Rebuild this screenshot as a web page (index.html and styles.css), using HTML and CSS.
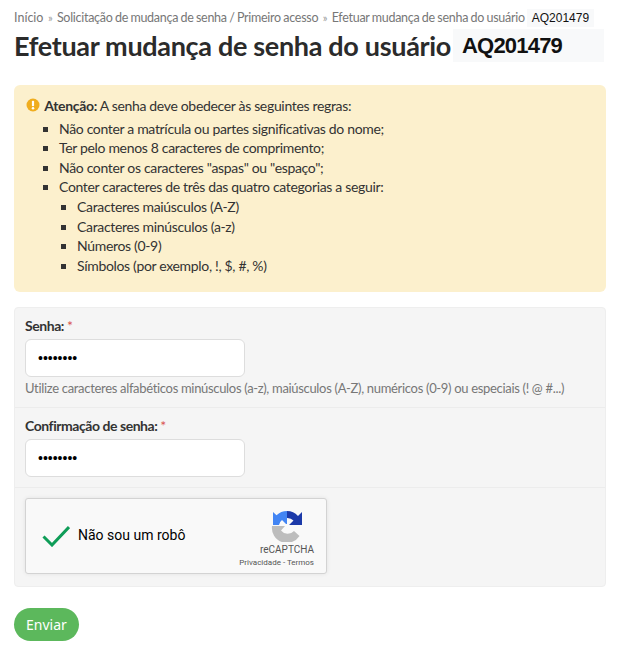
FILE: index.html
```html
<!DOCTYPE html>
<html lang="pt-BR">
<head>
    <meta charset="UTF-8">
    <meta name="viewport" content="width=device-width, initial-scale=1.0">
    <title>Efetuar mudança de senha do usuário</title>
    <link rel="stylesheet" href="styles.css">
</head>
<body>
    <nav class="breadcrumb">
        <a href="#">Início</a>
        <span class="sep">»</span>
        <a href="#">Solicitação de mudança de senha / Primeiro acesso</a>
        <span class="sep">»</span>
        <span>Efetuar mudança de senha do usuário</span>
        <span class="code-small">AQ201479</span>
    </nav>
    <div class="page-title">
        <h1>Efetuar mudança de senha do usuário</h1>
        <span class="code-big">AQ201479</span>
    </div>

    <div class="alert">
        <p class="alert-head">
            <svg class="alert-icon" viewBox="0 0 14 14" width="14" height="14">
                <circle cx="7" cy="7" r="6.5" fill="#f0ad1e"/>
                <rect x="5.9" y="2.8" width="2.2" height="5.4" rx="0.8" fill="#fff"/>
                <circle cx="7" cy="10.3" r="1.25" fill="#fff"/>
            </svg>
            <strong>Atenção:</strong> A senha deve obedecer às seguintes regras:
        </p>
        <ul>
            <li>Não conter a matrícula ou partes significativas do nome;</li>
            <li>Ter pelo menos 8 caracteres de comprimento;</li>
            <li>Não conter os caracteres "aspas" ou "espaço";</li>
            <li>Conter caracteres de três das quatro categorias a seguir:
                <ul>
                    <li>Caracteres maiúsculos (A-Z)</li>
                    <li>Caracteres minúsculos (a-z)</li>
                    <li>Números (0-9)</li>
                    <li>Símbolos (por exemplo, !, $, #, %)</li>
                </ul>
            </li>
        </ul>
    </div>

    <form class="panel">
        <div class="field">
            <label for="senha">Senha: <span class="req">*</span></label>
            <input type="password" id="senha" value="12345678">
            <p class="help">Utilize caracteres alfabéticos minúsculos (a-z), maiúsculos (A-Z), numéricos (0-9) ou especiais (! @ #...)</p>
        </div>
        <div class="field">
            <label for="confirma">Confirmação de senha: <span class="req">*</span></label>
            <input type="password" id="confirma" value="12345678">
        </div>
        <div class="field field-captcha">
            <div class="captcha">
                <svg class="captcha-check" viewBox="0 0 28 22" width="28" height="22">
                    <path d="M1.500 11.500 L10 20 L27 2" fill="none" stroke="#0f9d58" stroke-width="3"/>
                </svg>
                <span class="captcha-label">Não sou um robô</span>
                <div class="captcha-brand">
                    <svg class="captcha-logo" viewBox="0 0 32 32" width="32" height="32">
                        <path d="M16 1 A15 15 0 0 1 27 6 L31 2 V15 H18 L22.500 10.500 A8.500 8.500 0 0 0 16 8 Z" fill="#1c3aa9"/>
                        <path d="M16 1 A15 15 0 0 0 5.500 5.300 L2 2 V15 H8 A8 8 0 0 1 11 10 L15 14 H16 Z" fill="#4285f4"/>
                        <path d="M1 16 H14 L10 20.500 A8.500 8.500 0 0 0 23 21 L28.500 26 A15 15 0 0 1 1 16 Z" fill="#bdbdbd"/>
                    </svg>
                    <span class="captcha-name">reCAPTCHA</span>
                    <span class="captcha-links">Privacidade - Termos</span>
                </div>
            </div>
        </div>
    </form>

    <button class="btn-send" type="button">Enviar</button>
</body>
</html>
```

FILE: styles.css
```css
body {
    margin: 0;
    padding: 9px 12px 10px 14px;
    font-family: Lato, sans-serif;
    font-size: 14px;
    line-height: 1.4;
    letter-spacing: -0.33px;
    color: #333;
    background: #fff;
}
.breadcrumb {
    display: flex;
    align-items: center;
    gap: 4.5px;
    height: 18px;
    font-size: 12.5px;
    letter-spacing: -0.28px;
    word-spacing: -0.5px;
    color: #777;
    white-space: nowrap;
}
.breadcrumb a {
    color: #777;
    text-decoration: none;
}
.breadcrumb a:first-child {
    letter-spacing: 0;
}
.sep {
    color: #999;
    font-size: 11px;
}
.code-small {
    margin-left: -2.5px;
    padding: 0 5px;
    line-height: 18px;
    font-family: "Liberation Sans", sans-serif;
    font-size: 12px;
    letter-spacing: 0;
    color: #111;
    background: #f8f9fa;
}
.page-title {
    display: flex;
    align-items: center;
    gap: 2px;
    margin-top: 2px;
    margin-bottom: 23px;
}
h1 {
    margin: 0;
    font-size: 27px;
    font-weight: 700;
    line-height: 33px;
    letter-spacing: -0.32px;
    color: #2b2b2b;
    white-space: nowrap;
}
.code-big {
    width: 151px;
    padding-left: 9px;
    box-sizing: border-box;
    line-height: 33px;
    font-family: "Liberation Sans", sans-serif;
    font-size: 22px;
    font-weight: 700;
    letter-spacing: -0.8px;
    color: #111;
    background: #f8f9fa;
}
.alert {
    padding: 11px 12px 17px;
    border-radius: 6px;
    background: #fcf0cd;
    color: #333;
}
.alert-head {
    margin: 0 0 3px;
}
.alert-icon {
    vertical-align: -1px;
    margin-right: 1px;
}
.alert ul {
    margin: 0;
    padding-left: 33px;
    list-style: square;
}
.alert ul ul {
    padding-left: 18px;
}
.panel {
    margin-top: 15px;
    border: 1px solid #eee;
    border-radius: 4px;
    background: #f5f5f5;
}
.field {
    padding: 8px 10px 10px;
    border-bottom: 1px solid #ececec;
}
.field-captcha {
    padding: 10px 10px 12px;
    border-bottom: 0;
}
label {
    display: block;
    margin-bottom: 3px;
    font-weight: 700;
    letter-spacing: -0.45px;
    color: #333;
}
.req {
    color: #d9534f;
    font-weight: 400;
}
input {
    display: block;
    width: 220px;
    height: 38px;
    box-sizing: border-box;
    padding: 6px 12px;
    border: 1px solid #ddd;
    border-radius: 6px;
    background: #fff;
    font-size: 14px;
    color: #000;
}
.help {
    margin: 3px 0 0;
    font-size: 13px;
    line-height: 17px;
    letter-spacing: -0.32px;
    color: #777;
    white-space: nowrap;
}
.captcha {
    display: flex;
    align-items: center;
    box-sizing: border-box;
    width: 302px;
    height: 76px;
    padding: 0 12px 0 16px;
    border: 1px solid #d3d3d3;
    border-radius: 3px;
    background: #f9f9f9;
    box-shadow: 0 0 4px rgba(0, 0, 0, 0.08);
}
.captcha-check {
    margin-right: 8px;
}
.captcha-label {
    flex: 1;
    font-family: Roboto, sans-serif;
    font-size: 14px;
    letter-spacing: 0;
    color: #000;
}
.captcha-brand {
    display: flex;
    flex-direction: column;
    align-items: flex-end;
    align-self: flex-start;
    padding-top: 11px;
    font-family: Roboto, sans-serif;
    letter-spacing: 0;
    color: #555;
}
.captcha-logo {
    margin-right: 11px;
}
.captcha-name {
    margin-top: 1px;
    font-size: 10px;
    line-height: 14px;
}
.captcha-links {
    font-size: 8px;
    line-height: 12px;
}
.btn-send {
    display: block;
    margin-top: 21px;
    padding: 0 12px;
    height: 33px;
    border: none;
    border-radius: 17px;
    background: #5cb85c;
    color: #fff;
    font-family: "Noto Sans", sans-serif;
    font-size: 14px;
    cursor: pointer;
}
```
